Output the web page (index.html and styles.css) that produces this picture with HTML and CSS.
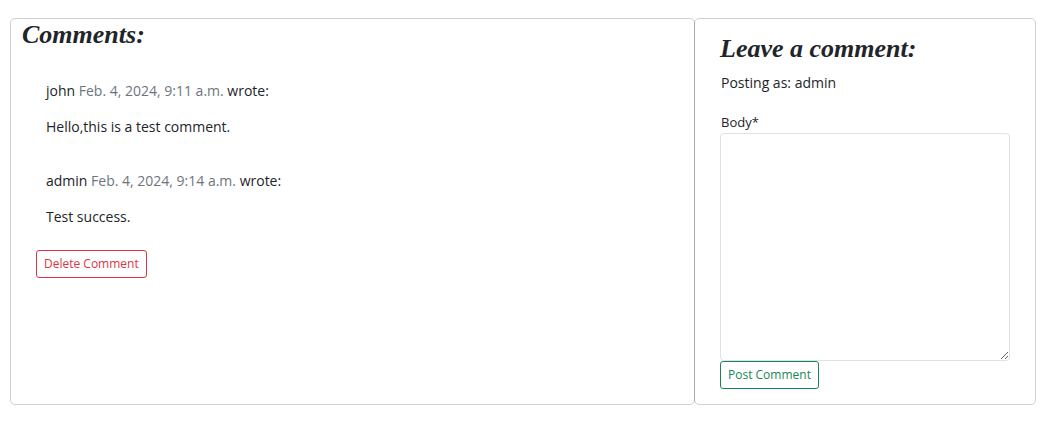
FILE: index.html
```html
<!DOCTYPE html>
<html>
<head>
<meta charset="utf-8">
<link rel="stylesheet" href="styles.css">
</head>
<body>
<div class="row">
  <section class="card comments-card">
    <h3 class="heading">Comments:</h3>
    <div class="comment">
      <p class="meta">john <span class="date">Feb. 4, 2024, 9:11 a.m.</span> wrote:</p>
      <p class="body">Hello,this is a test comment.</p>
    </div>
    <div class="comment">
      <p class="meta">admin <span class="date">Feb. 4, 2024, 9:14 a.m.</span> wrote:</p>
      <p class="body">Test success.</p>
    </div>
    <button class="btn btn-danger">Delete Comment</button>
  </section>
  <section class="card form-card">
    <h3 class="heading">Leave a comment:</h3>
    <p class="posting">Posting as: admin</p>
    <label class="label" for="body">Body*</label>
    <textarea id="body" class="textarea"></textarea>
    <button class="btn btn-success">Post Comment</button>
  </section>
</div>
</body>
</html>
```

FILE: styles.css
```css
html, body {
  margin: 0;
  padding: 0;
  background: #fff;
}
body {
  font-family: "Open Sans", "Noto Sans", sans-serif;
  font-size: 14px;
  color: #212529;
}
.row {
  display: flex;
  padding: 18px 9px 0 10px;
}
.card {
  border: 1px solid rgba(0,0,0,0.18);
  border-radius: 5px;
  height: 387px;
  box-sizing: border-box;
  display: flex;
  flex-direction: column;
  align-items: flex-start;
}
.comments-card {
  width: 685px;
  padding: 0 0 0 11px;
}
.form-card {
  width: 342px;
  margin-left: -1px;
  padding: 14px 0 0 25px;
}
.heading {
  font-family: "Liberation Serif", "DejaVu Serif", serif;
  font-style: italic;
  font-weight: 700;
  font-size: 26px;
  line-height: 32px;
  margin: 0;
  color: #212529;
}
.comment {
  padding-left: 24px;
  margin-top: 30px;
}
.comment + .comment {
  margin-top: 34px;
}
.comment p {
  margin: 0;
  line-height: 20px;
}
.comment .body {
  margin-top: 16px;
}
.date {
  color: #6c757d;
}
.btn {
  font-family: "Open Sans", "Noto Sans", sans-serif;
  font-size: 12px;
  line-height: 18px;
  background: #fff;
  border-radius: 3px;
  padding: 4px 7px 4px;
  cursor: pointer;
}
.btn-danger {
  color: #dc3545;
  border: 1px solid #dc3545;
  margin: 23px 0 0 14px;
}
.btn-success {
  color: #198754;
  border: 1px solid #198754;
  margin: 0;
}
.posting {
  margin: 8px 0 0 1px;
  line-height: 20px;
}
.label {
  margin: 19px 0 0 1px;
  font-size: 13px;
  line-height: 20px;
}
.textarea {
  margin: 1px 0 0 0;
  width: 290px;
  height: 228px;
  box-sizing: border-box;
  border: 1px solid #dee2e6;
  border-radius: 4px;
  font-family: inherit;
  resize: both;
}
```
